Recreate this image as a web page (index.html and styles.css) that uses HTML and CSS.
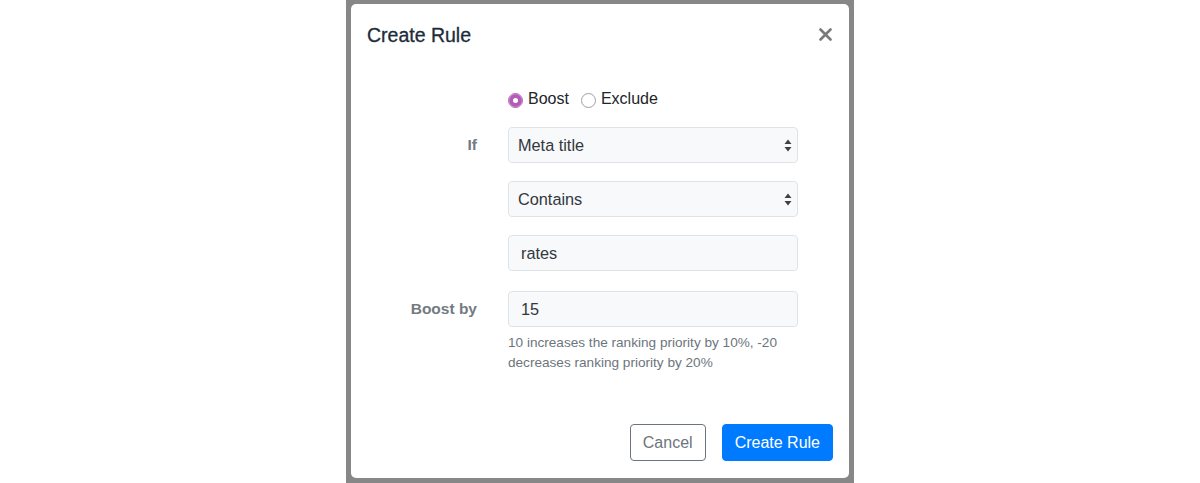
FILE: index.html
```html
<!DOCTYPE html>
<html>
<head>
<meta charset="utf-8">
<link rel="stylesheet" href="styles.css">
</head>
<body>
<div class="backdrop">
  <div class="modal">
    <div class="modal-header">
      <h5 class="modal-title">Create Rule</h5>
      <svg class="close" width="13" height="13" viewBox="0 0 13 13"><path d="M1.5 1.5 L11.5 11.5 M11.5 1.5 L1.5 11.5" stroke="#7a7a7a" stroke-width="2.6" stroke-linecap="round"/></svg>
    </div>
    <div class="modal-body">
      <div class="form-grid">
        <div class="label"></div>
        <div class="radios">
          <span class="radio checked"></span><span class="radio-label">Boost</span>
          <span class="radio"></span><span class="radio-label">Exclude</span>
        </div>

        <div class="label">If</div>
        <div class="select"><span>Meta title</span>
          <svg width="8" height="13" viewBox="0 0 8 13"><path d="M4 0.5 L7.5 5 L0.5 5 Z M0.5 8 L7.5 8 L4 12.5 Z" fill="#3d4247"/></svg>
        </div>

        <div class="label"></div>
        <div class="select"><span>Contains</span>
          <svg width="8" height="13" viewBox="0 0 8 13"><path d="M4 0.5 L7.5 5 L0.5 5 Z M0.5 8 L7.5 8 L4 12.5 Z" fill="#3d4247"/></svg>
        </div>

        <div class="label"></div>
        <div class="input">rates</div>

        <div class="label boost-label">Boost by</div>
        <div class="boost-field">
          <div class="input">15</div>
          <p class="help">10 increases the ranking priority by 10%, -20 decreases ranking priority by 20%</p>
        </div>
      </div>
    </div>
    <div class="modal-footer">
      <button class="btn btn-cancel">Cancel</button>
      <button class="btn btn-primary">Create Rule</button>
    </div>
  </div>
</div>
</body>
</html>
```

FILE: styles.css
```css
html, body {
  margin: 0;
  padding: 0;
  background: #ffffff;
  font-family: "Liberation Sans", Arial, sans-serif;
}

.backdrop {
  width: 508px;
  height: 483px;
  margin-left: 346px;
  background: #878787;
  padding: 4px 5px 5px 5px;
  box-sizing: border-box;
}

.modal {
  background: #ffffff;
  border-radius: 5px;
  height: 474px;
  display: flex;
  flex-direction: column;
}

.modal-header {
  display: flex;
  justify-content: space-between;
  align-items: center;
  padding: 16px 17px 16px 16px;
}

.modal-title {
  margin: 0;
  font-size: 19.5px;
  line-height: 30px;
  font-weight: 500;
  color: #1d2b3a;
  -webkit-text-stroke: 0.3px #1d2b3a;
}

.close {
  display: block;
  margin-top: -2px;
}

.modal-body {
  padding: 21px 16px 0 16px;
}

.form-grid {
  display: grid;
  grid-template-columns: 110px 290px;
  column-gap: 31px;
  row-gap: 18px;
  align-items: start;
}

.radios {
  display: flex;
  align-items: center;
  height: 24px;
  margin-bottom: -2px;
  font-size: 16px;
  color: #212529;
}

.radio {
  width: 13px;
  height: 13px;
  border-radius: 50%;
  border: 1px solid #a0a0a0;
  background: #fff;
  margin-right: 5px;
  position: relative;
  top: 1px;
}

.radio.checked {
  border-color: #b25cb6;
  background: #ffffff;
  box-shadow: inset 0 0 0 4px #b25cb6;
}

.radio-label {
  margin-right: 12px;
}

.label {
  text-align: right;
  font-size: 15.5px;
  font-weight: 700;
  color: #737a80;
  line-height: 36px;
}

.select, .input {
  height: 36px;
  box-sizing: border-box;
  border: 1px solid #dfe3e7;
  border-radius: 4px;
  background: #f8f9fa;
  font-size: 16.3px;
  color: #32383e;
  display: flex;
  align-items: center;
}

.select {
  justify-content: space-between;
  padding: 0 5px 0 9px;
}

.input {
  padding: 0 12px;
}

.boost-label, .boost-field {
  margin-top: 2px;
}

.help {
  margin: 6px 0 0 0;
  font-size: 13.6px;
  line-height: 19.5px;
  color: #6c757d;
}

.modal-footer {
  margin-top: auto;
  display: flex;
  justify-content: flex-end;
  gap: 16px;
  padding: 0 16px 17px 16px;
}

.btn {
  font-family: "Liberation Sans", Arial, sans-serif;
  font-size: 16px;
  height: 37px;
  padding: 0 12px;
  border-radius: 4px;
  border: 1px solid transparent;
  cursor: pointer;
}

.btn-cancel {
  background: #ffffff;
  border-color: #6c757d;
  color: #6c757d;
}

.btn-primary {
  background: #007bff;
  border-color: #007bff;
  color: #ffffff;
}
```
